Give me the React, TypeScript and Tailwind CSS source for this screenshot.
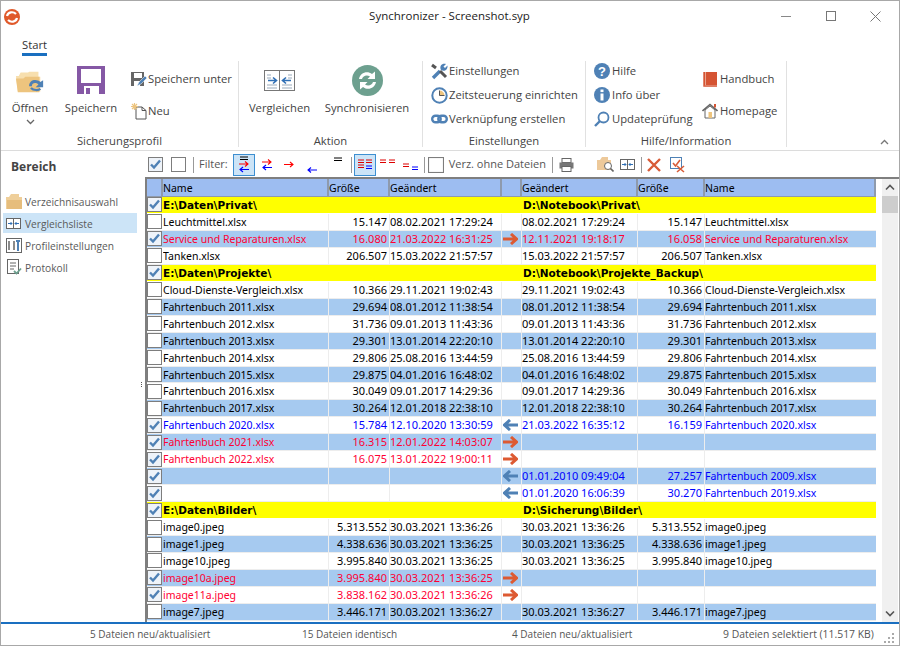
import React from "react";

const BLUE = "#4f81b5";
type Row = { t: "h"; l: string; r: string } | { t?: "f"; c?: boolean; k?: "n" | "r" | "b"; a?: "r" | "l"; n?: string; s?: string; d?: string; d2?: string; s2?: string; n2?: string; k2?: "n" | "r" | "b"; };

const same = (n: string, s: string, d: string, s2?: string): Row => ({ n, s, d, d2: d, s2: s2 ?? s, n2: n });
const rows: Row[] = [
  { t: "h", l: "E:\\Daten\\Privat\\", r: "D:\\Notebook\\Privat\\" },
  same("Leuchtmittel.xlsx", "15.147", "08.02.2021 17:29:24"),
  { c: true, k: "r", a: "r", n: "Service und Reparaturen.xlsx", s: "16.080", d: "21.03.2022 16:31:25", d2: "12.11.2021 19:18:17", s2: "16.058", n2: "Service und Reparaturen.xlsx" },
  same("Tanken.xlsx", "206.507", "15.03.2022 21:57:57"),
  { t: "h", l: "E:\\Daten\\Projekte\\", r: "D:\\Notebook\\Projekte_Backup\\" },
  { n: "Cloud-Dienste-Vergleich.xlsx", s: "10.366", d: "29.11.2021 19:02:43", d2: "29.11.2021 19:02:43", s2: "10.366", n2: "Cloud-Dienste-Vergleich.xlsx" },
  same("Fahrtenbuch 2011.xlsx", "29.694", "08.01.2012 11:38:54"),
  same("Fahrtenbuch 2012.xlsx", "31.736", "09.01.2013 11:43:36"),
  same("Fahrtenbuch 2013.xlsx", "29.301", "13.01.2014 22:20:10"),
  same("Fahrtenbuch 2014.xlsx", "29.806", "25.08.2016 13:44:59"),
  same("Fahrtenbuch 2015.xlsx", "29.875", "04.01.2016 16:48:02"),
  same("Fahrtenbuch 2016.xlsx", "30.049", "09.01.2017 14:29:36"),
  same("Fahrtenbuch 2017.xlsx", "30.264", "12.01.2018 22:38:10"),
  { c: true, k: "b", a: "l", n: "Fahrtenbuch 2020.xlsx", s: "15.784", d: "12.10.2020 13:30:59", d2: "21.03.2022 16:35:12", s2: "16.159", n2: "Fahrtenbuch 2020.xlsx" },
  { c: true, k: "r", a: "r", n: "Fahrtenbuch 2021.xlsx", s: "16.315", d: "12.01.2022 14:03:07" },
  { c: true, k: "r", a: "r", n: "Fahrtenbuch 2022.xlsx", s: "16.075", d: "13.01.2022 19:00:11" },
  { c: true, k: "b", a: "l", d2: "01.01.2010 09:49:04", s2: "27.257", n2: "Fahrtenbuch 2009.xlsx" },
  { c: true, k: "b", a: "l", d2: "01.01.2020 16:06:39", s2: "30.270", n2: "Fahrtenbuch 2019.xlsx" },
  { t: "h", l: "E:\\Daten\\Bilder\\", r: "D:\\Sicherung\\Bilder\\" },
  same("image0.jpeg", "5.313.552", "30.03.2021 13:36:26"),
  same("image1.jpeg", "4.338.636", "30.03.2021 13:36:25"),
  same("image10.jpeg", "3.995.840", "30.03.2021 13:36:25"),
  { c: true, k: "r", a: "r", n: "image10a.jpeg", s: "3.995.840", d: "30.03.2021 13:36:25" },
  { c: true, k: "r", a: "r", n: "image11a.jpeg", s: "3.838.162", d: "30.03.2021 13:36:26" },
  same("image7.jpeg", "3.446.171", "30.03.2021 13:36:27"),
];
const colors = { n: "text-black", r: "text-[#ff0033]", b: "text-[#0000ff]" };

function Check({ on, size = 15 }: { on?: boolean; size?: number }) {
  return (
    <svg width={size} height={size} viewBox="0 0 15 15" className="shrink-0">
      <rect x="0.5" y="0.5" width="14" height="14" fill={on ? "#eef3f9" : "#fff"} stroke="#7d7d7d" />
      {on && <path d="M3 7.5 L6 10.5 L12 3.5" fill="none" stroke={BLUE} strokeWidth="2.4" />}
    </svg>
  );
}
function BigArrow({ dir }: { dir: "r" | "l" }) {
  return dir === "r" ? (
    <svg width="15" height="12" viewBox="0 0 15 12"><path d="M0 6 H12.5 M8 1 L13.5 6 L8 11" fill="none" stroke="#dd5a32" strokeWidth="3" /></svg>
  ) : (
    <svg width="15" height="12" viewBox="0 0 15 12"><path d="M15 6 H2.5 M7 1 L1.5 6 L7 11" fill="none" stroke="#4f81b5" strokeWidth="3" /></svg>
  );
}

const FolderOpen = () => (
  <svg width="30" height="24" viewBox="0 0 32 28" preserveAspectRatio="none">
    <path d="M3 25 L1 7 H4 L6 3 H14 L15 2 H25 V8 H27 V25 Z" fill="#f7dfae" />
    <path d="M3 26 L1 10 H9 L11 8 H26 V26 Z" fill="#edc47e" />
    <path d="M15 19 C15 11 23 10 27 14 L30 12 L30 20 L22 20 L25 17 C22 14 18 15 18 19 Z" fill="#4f81b5" />
    <path d="M17 21 C20 24 25 24 27 22" fill="none" stroke="#4f81b5" strokeWidth="2.5" />
  </svg>
);
const Floppy = () => (
  <svg width="28" height="28" viewBox="0 0 28 28">
    <path d="M0 0 H28 V28 H0 Z" fill="#8558a5" />
    <rect x="4" y="3" width="20" height="14" fill="#fff" />
    <rect x="7" y="20" width="15" height="8" fill="#fff" />
    <rect x="9" y="22" width="4" height="6" fill="#8558a5" />
  </svg>
);
const SaveAs = () => (
  <svg width="16" height="16" viewBox="0 0 16 16">
    <path d="M0 1 H13 V15 H0 Z" fill="#666" />
    <rect x="3" y="2" width="8" height="5" fill="#fff" />
    <rect x="3" y="10" width="6" height="5" fill="#fff" />
    <path d="M6 15 L8 11 L14 5 L16 7 L10 13 Z" fill="#4f81b5" stroke="#fff" strokeWidth="0.5" />
  </svg>
);
const NewDoc = () => (
  <svg width="16" height="17" viewBox="0 0 16 17">
    <path d="M5 4 H11 L15 7.5 V16 H5 Z M11 4 V7.5 H15" fill="#fff" stroke="#555" />
    <path d="M3.5 0 V7 M0 3.5 H7 M1 1 L6 6 M6 1 L1 6" stroke="#edc47e" strokeWidth="1.2" />
  </svg>
);
const Compare = () => (
  <svg width="31" height="21" viewBox="0 0 31 21">
    <rect x="0.5" y="0.5" width="30" height="20" fill="#fff" stroke="#777" />
    <path d="M15.5 0 V21" stroke="#777" />
    <path d="M3 5 H7 M3 8 H7 M3 15 H13 M3 18 H13 M18 15 H28 M18 18 H28 M24 5 H28 M24 8 H28" stroke="#9ab" />
    <path d="M4 10.5 H12 M9 7.5 L12.5 10.5 L9 13.5 M27 10.5 H19 M22 7.5 L18.5 10.5 L22 13.5" fill="none" stroke="#2f6fb5" strokeWidth="1.6" />
  </svg>
);
const CompareSmall = () => (
  <svg width="15" height="11" viewBox="0 0 15 11">
    <rect x="0.5" y="0.5" width="14" height="10" fill="#fff" stroke="#666" />
    <path d="M7.5 0 V11" stroke="#666" />
    <path d="M2 5.5 H6 M4.5 4 L6 5.5 L4.5 7 M13 5.5 H9 M10.5 4 L9 5.5 L10.5 7" fill="none" stroke="#2f6fb5" />
  </svg>
);
const Sync = () => (
  <svg width="31" height="31" viewBox="0 0 31 31">
    <circle cx="15.5" cy="15.5" r="15.5" fill="#6da08f" />
    <path d="M7 14 C8 8 15 5 20 9 L23 6.5 V14 H15.5 L18 11.5 C14.5 9.5 11 11 10 14 Z" fill="#fff" />
    <path d="M24 17 C23 23 16 26 11 22 L8 24.5 V17 H15.5 L13 19.5 C16.5 21.5 20 20 21 17 Z" fill="#fff" />
  </svg>
);
const Wrench = () => (
  <svg width="17" height="17" viewBox="0 0 17 17">
    <path d="M2 15 L9 8" stroke="#4f81b5" strokeWidth="3.4" />
    <path d="M9 8 L15 14" stroke="#555" strokeWidth="3" />
    <path d="M1 2 L5 5" stroke="#555" strokeWidth="3" />
    <path d="M10 7 C8 3 11 0 15 1 L12.5 3.5 L14 5 L16.5 2.5 C17 7 13 9 10 7 Z" fill="#4f81b5" />
  </svg>
);
const Clock = () => (
  <svg width="17" height="17" viewBox="0 0 17 17">
    <circle cx="8.5" cy="8.5" r="7.2" fill="#fff" stroke="#4f81b5" strokeWidth="2" />
    <path d="M8.5 3.5 A5 5 0 0 1 13.5 8.5 H8.5 Z" fill="#edc47e" />
    <path d="M8.5 3.5 V8.5 H13.5" fill="none" stroke="#555" />
  </svg>
);
const Link = () => (
  <svg width="17" height="10" viewBox="0 0 17 10">
    <rect x="1.2" y="1.7" width="8.5" height="6.6" rx="3.3" fill="none" stroke="#4f81b5" strokeWidth="2.4" />
    <rect x="7.3" y="1.7" width="8.5" height="6.6" rx="3.3" fill="none" stroke="#4f81b5" strokeWidth="2.4" />
  </svg>
);
const Help = () => (
  <svg width="16" height="16" viewBox="0 0 16 16">
    <circle cx="8" cy="8" r="8" fill="#4f81b5" />
    <text x="8" y="12.5" textAnchor="middle" fontSize="13" fontWeight="700" fill="#fff" fontFamily="Liberation Sans">?</text>
  </svg>
);
const Info = () => (
  <svg width="16" height="16" viewBox="0 0 16 16">
    <circle cx="8" cy="8" r="8" fill="#4f81b5" />
    <rect x="6.5" y="2.5" width="3" height="2.6" fill="#fff" />
    <rect x="6.5" y="6.5" width="3" height="7" fill="#fff" />
  </svg>
);
const Search = () => (
  <svg width="16" height="16" viewBox="0 0 16 16">
    <circle cx="9.5" cy="6.5" r="5" fill="#fff" stroke="#4f81b5" strokeWidth="1.8" />
    <path d="M6 10 L1 15" stroke="#4f81b5" strokeWidth="2.4" />
  </svg>
);
const Book = () => (
  <svg width="15" height="16" viewBox="0 0 15 16">
    <path d="M1 1 H14 V14 H1 Z" fill="#d55433" />
    <path d="M1 1 V15 H14" fill="none" stroke="#d55433" strokeWidth="1.4" />
    <path d="M2.5 1 V14" stroke="#e9a48f" />
  </svg>
);
const Home = () => (
  <svg width="16" height="16" viewBox="0 0 16 16">
    <path d="M3 7 V15 H13 V7 L8 3 Z" fill="#fff" stroke="#666" />
    <path d="M0.5 8 L8 1.5 L15.5 8" fill="none" stroke="#666" strokeWidth="1.6" />
    <rect x="6.5" y="9" width="3.5" height="6" fill="#edc47e" />
    <rect x="12" y="1" width="2" height="3.5" fill="#d55433" />
  </svg>
);

const Small = ({ icon, text, w = 20 }: { icon: React.ReactNode; text: string; w?: number }) => (
  <div className="flex items-center h-[24px]">
    <span className="flex items-center justify-center shrink-0" style={{ width: w }}>{icon}</span>
    <span className="whitespace-nowrap">{text}</span>
  </div>
);
const Group = ({ w, label, children }: { w: number; label: string; children: React.ReactNode }) => (
  <div className="flex flex-col h-[86px] border-r border-[#e1e1e1] shrink-0" style={{ width: w }}>
    <div className="h-[72px] flex shrink-0">{children}</div>
    <div className="text-center h-[14px] leading-[16px] text-[#444]">{label}</div>
  </div>
);

const FA = ({ c, d }: { c: string; d: "r" | "l" }) => (
  <path d={d === "r" ? "M0 3 H9 M6 0.5 L9 3 L6 5.5" : "M10 3 H1 M4 0.5 L1 3 L4 5.5"} fill="none" stroke={c} strokeWidth="1.1" />
);
const Sep = ({ ml }: { ml: number }) => <div className="w-px h-[16px] bg-[#999] shrink-0" style={{ marginLeft: ml }} />;
const Tool = ({ w, ml = 0, sel, children }: { w: number; ml?: number; sel?: boolean; children: React.ReactNode }) => (
  <div className={`h-[22px] flex items-center justify-center shrink-0 ${sel ? "bg-[#cce4f7] border border-[#3d8fd1]" : ""}`} style={{ width: w, marginLeft: ml }}>{children}</div>
);

const cols = ["w-[16px]", "w-[166px]", "w-[61px]", "w-[112px]", "w-[20px]", "w-[116px]", "w-[67px]", "w-[171px]"];

function HeaderCell({ w, text }: { w: string; text?: string }) {
  return (
    <div className={`${w} h-[18px] shrink-0 bg-[#9dbdf1] border-r-2 border-[#8e9aad] border-b border-b-[#8e9aad] leading-[18px] overflow-hidden text-[10.5px]`}>{text}</div>
  );
}

function Data({ r, i }: { r: Row; i: number }) {
  if (r.t === "h") {
    return (
      <div className="flex h-[16.96px] bg-[#ffff00] border-b border-white font-bold text-black leading-[17px] text-[10.5px]" style={{ fontFamily: '"DejaVu Sans",sans-serif' }}>
        <div className="w-[16px] flex items-center justify-start shrink-0"><Check on /></div>
        <div className="w-[359px] shrink-0">{r.l}</div>
        <div className="pl-[1px] whitespace-nowrap">{r.r}</div>
      </div>
    );
  }
  const f = r as Exclude<Row, { t: "h" }>;
  const c = colors[f.k ?? "n"];
  const cell = "border-r border-[#ededed] h-full shrink-0 overflow-hidden whitespace-nowrap";
  return (
    <div className={`flex h-[16.96px] border-b border-[#ededed] leading-[16px] ${c} ${i % 2 === 0 ? "bg-[#a6caf0]" : "bg-white"}`}>
      <div className="w-[16px] h-full shrink-0 flex items-center"><Check on={f.c} /></div>
      <div className={`${cols[1]} ${cell} text-[10.5px]`}>{f.n}</div>
      <div className={`${cols[2]} ${cell} pr-[2px] text-right`}>{f.s}</div>
      <div className={`${cols[3]} ${cell}`}>{f.d}</div>
      <div className={`${cols[4]} ${cell} flex items-center justify-center pr-[2px]`}>{f.a && <BigArrow dir={f.a} />}</div>
      <div className={`${cols[5]} ${cell}`}>{f.d2}</div>
      <div className={`${cols[6]} ${cell} pr-[2px] text-right`}>{f.s2}</div>
      <div className={`${cols[7]} h-full shrink-0 overflow-hidden whitespace-nowrap text-[10.5px]`}>{f.n2}</div>
    </div>
  );
}

const Side = ({ icon, text, sel }: { icon: React.ReactNode; text: string; sel?: boolean }) => (
  <div className={`flex items-center h-[20px] mb-[2px] ml-[2px] w-[134px] ${sel ? "bg-[#cce4f7]" : ""}`}>
    <span className="w-[22px] pl-[3px] flex items-center shrink-0">{icon}</span>
    <span className="whitespace-nowrap mt-[3px]">{text}</span>
  </div>
);

export default function App() {
  const ui = { fontFamily: '"Open Sans","Noto Sans",sans-serif' };
  return (
    <div className="w-[900px] h-[646px] bg-white border border-[#a8a8a8] flex flex-col overflow-hidden text-[11.25px] text-[#444]" style={ui}>
      {/* Title */}
      <div className="h-[30px] shrink-0 flex items-center pt-[2px]">
        <svg width="16" height="16" viewBox="0 0 16 16" className="ml-[3px] shrink-0">
          <circle cx="8" cy="8" r="8" fill="#e0592a" />
          <path d="M3 7 C4 3 9 2 12 5 M13 9 C12 13 7 14 4 11" fill="none" stroke="#fff" strokeWidth="2.2" />
        </svg>
        <div className="flex-1 text-center text-[11.5px] text-[#222] pl-[116px] -mt-[2px]">Synchronizer - Screenshot.syp</div>
        <div className="flex items-center w-[135px] h-full mr-[1px] -mt-[2px]">
          <div className="w-[45px] flex justify-center"><div className="w-[10px] h-px bg-[#888]" /></div>
          <div className="w-[45px] flex justify-center"><div className="w-[10px] h-[10px] border border-[#777]" /></div>
          <div className="w-[45px] flex justify-center">
            <svg width="11" height="11" viewBox="0 0 11 11"><path d="M0.5 0.5 L10.5 10.5 M10.5 0.5 L0.5 10.5" stroke="#777" /></svg>
          </div>
        </div>
      </div>
      {/* Tabs */}
      <div className="h-[25px] shrink-0 pl-[21px] flex items-end">
        <div className="h-[25px] w-[25px] text-center text-[#333] border-b-[3px] border-[#1a6fc0] leading-[28px] whitespace-nowrap flex justify-center">Start</div>
      </div>
      {/* Ribbon */}
      <div className="h-[95px] shrink-0 border-b border-[#dcdcdc] flex pt-[5px] relative text-[#444]">
        <Group w={238} label="Sicherungsprofil">
          <div className="w-[58px] flex flex-col items-center pt-[9px] shrink-0">
            <div className="h-[24px]"><FolderOpen /></div>
            <div className="mt-[6px] leading-[16px]">Öffnen</div>
            <svg width="9" height="6" viewBox="0 0 9 6" className="mt-[3px]"><path d="M1 1 L4.5 4.5 L8 1" fill="none" stroke="#666" strokeWidth="1.3" /></svg>
          </div>
          <div className="w-[64px] flex flex-col items-center pt-[5px] shrink-0">
            <Floppy />
            <div className="mt-[6px] leading-[16px]">Speichern</div>
          </div>
          <div className="flex flex-col pl-[6px] pt-[6px] gap-[8px]">
            <Small icon={<SaveAs />} text="Speichern unter" w={19} />
            <Small icon={<NewDoc />} text="Neu" w={19} />
          </div>
        </Group>
        <Group w={184} label="Aktion">
          <div className="w-[81px] flex flex-col items-center pt-[9px] shrink-0">
            <div className="h-[24px]"><Compare /></div>
            <div className="mt-[6px] leading-[16px]">Vergleichen</div>
          </div>
          <div className="flex-1 flex flex-col items-center pt-[4px] pr-[8px]">
            <Sync />
            <div className="mt-[4px] leading-[16px] whitespace-nowrap">Synchronisieren</div>
          </div>
        </Group>
        <Group w={163} label="Einstellungen">
          <div className="flex flex-col pl-[6px] -mt-[2px]">
            <Small icon={<Wrench />} text="Einstellungen" />
            <Small icon={<Clock />} text="Zeitsteuerung einrichten" />
            <Small icon={<Link />} text="Verknüpfung erstellen" />
          </div>
        </Group>
        <Group w={201} label="Hilfe/Information">
          <div className="flex flex-col pl-[6px] w-[114px] shrink-0 -mt-[2px]">
            <Small icon={<Help />} text="Hilfe" />
            <Small icon={<Info />} text="Info über" />
            <Small icon={<Search />} text="Updateprüfung" />
          </div>
          <div className="flex flex-col pt-[6px] gap-[8px]">
            <Small icon={<Book />} text="Handbuch" />
            <Small icon={<Home />} text="Homepage" />
          </div>
        </Group>
        <svg width="9" height="6" viewBox="0 0 9 6" className="absolute right-[10px] bottom-[5px]"><path d="M1 5 L4.5 1.5 L8 5" fill="none" stroke="#777" strokeWidth="1.3" /></svg>
      </div>
      {/* Main */}
      <div className="flex-1 flex min-h-0 relative">
        <div className="w-[144px] shrink-0 text-[#5a5a5a] text-[10.2px]">
          <div className="pl-[10px] pt-[7px] h-[40px] font-bold text-[12px] text-[#444]">Bereich</div>
          <Side text="Verzeichnisauswahl" icon={
            <svg width="17" height="15" viewBox="0 0 17 15"><path d="M0 3 H3 L5 0 H13 V3 H16 V15 H0 Z" fill="#efcf9a" /><path d="M1 6 H16 V15 H1 Z" fill="#e6bd7c" /></svg>
          } />
          <Side sel text="Vergleichsliste" icon={<CompareSmall />} />
          <Side text="Profileinstellungen" icon={
            <svg width="16" height="15" viewBox="0 0 16 15"><rect x="0.5" y="0.5" width="15" height="14" fill="#fff" stroke="#666" /><path d="M3 3 V12 M8 3 V12" stroke="#666" strokeWidth="1.5" /><path d="M12 2 V13 M10 3 H14" stroke="#4f81b5" strokeWidth="2" /></svg>
          } />
          <Side text="Protokoll" icon={
            <svg width="16" height="16" viewBox="0 0 16 16"><rect x="1.5" y="0.5" width="11" height="14" fill="#fff" stroke="#666" /><path d="M4 4 H10 M4 7 H10 M4 10 H8" stroke="#666" /><path d="M8 12 L10.5 14.5 L15 9.5" fill="none" stroke="#6da08f" strokeWidth="1.8" /></svg>
          } />
        </div>
        <div className="absolute left-[140px] top-[231px] flex flex-col gap-[1px]">
          <div className="w-px h-px bg-[#555]" /><div className="w-px h-px bg-[#555]" /><div className="w-px h-px bg-[#555]" />
        </div>
        <div className="flex-1 flex flex-col min-w-0">
          {/* Toolbar */}
          <div className="h-[26px] shrink-0 flex items-center pt-[1px]">
            <div className="ml-[3px]"><Check on size={15} /></div>
            <div className="ml-[8px]"><Check size={15} /></div>
            <Sep ml={7} />
            <span className="ml-[5px] mr-[5px] text-[11px] text-[#555]">Filter:</span>
            <Tool w={22} sel>
              <svg width="12" height="17" viewBox="0 0 12 17"><path d="M2 1 H10 M2 3.5 H10" stroke="#000" /><g transform="translate(1 5)"><FA c="#f00" d="r" /></g><g transform="translate(1 10.5)"><FA c="#00f" d="l" /></g></svg>
            </Tool>
            <Tool w={22} ml={1}>
              <svg width="12" height="13" viewBox="0 0 12 13"><g transform="translate(1 1)"><FA c="#f00" d="r" /></g><g transform="translate(1 6.5)"><FA c="#00f" d="l" /></g></svg>
            </Tool>
            <Tool w={23}>
              <svg width="12" height="7" viewBox="0 0 12 7"><g transform="translate(1 0.5)"><FA c="#f00" d="r" /></g></svg>
            </Tool>
            <Tool w={23}>
              <svg width="12" height="16" viewBox="0 0 12 16"><g transform="translate(1 10)"><FA c="#00f" d="l" /></g></svg>
            </Tool>
            <Tool w={24} ml={2}>
              <svg width="10" height="16" viewBox="0 0 10 16"><path d="M1 1 H9 M1 3.5 H9" stroke="#000" /></svg>
            </Tool>
            <Sep ml={1} />
            <Tool w={22} ml={2} sel>
              <svg width="16" height="12" viewBox="0 0 16 12"><path d="M1 1 H7 M1 3.5 H7 M1 6 H7 M1 8.5 H7" stroke="#d00" /><path d="M9 1 H15 M9 3.5 H15" stroke="#d00" /><path d="M9 7 H15 M9 9.5 H15" stroke="#00f" /></svg>
            </Tool>
            <Tool w={20} ml={2}>
              <svg width="15" height="12" viewBox="0 0 15 12"><path d="M0 1 H6 M0 3.5 H6 M9 1 H15 M9 3.5 H15" stroke="#d00" /></svg>
            </Tool>
            <Tool w={23} ml={2}>
              <svg width="18" height="12" viewBox="0 0 18 12"><path d="M1 5 H7 M1 7.5 H7" stroke="#d00" /><path d="M10 8 H16 M10 10.5 H16" stroke="#00f" /></svg>
            </Tool>
            <Sep ml={1} />
            <div className="ml-[3px]"><Check size={16} /></div>
            <span className="ml-[5px] text-[11px] text-[#555] whitespace-nowrap w-[98px]">Verz. ohne Dateien</span>
            <Sep ml={5} />
            <svg width="15" height="14" viewBox="0 0 15 14" className="ml-[6px] shrink-0"><rect x="3" y="0.5" width="9" height="4" fill="#fff" stroke="#666" /><rect x="0.5" y="4.5" width="14" height="6" fill="#777" /><rect x="3" y="8.5" width="9" height="5" fill="#fff" stroke="#666" /></svg>
            <svg width="17" height="15" viewBox="0 0 17 15" className="ml-[23px] shrink-0"><path d="M0 3 H3 L5 0 H11 V3 H14 V13 H0 Z" fill="#edc99a" /><circle cx="11" cy="9" r="3.5" fill="#fff" stroke="#666" /><path d="M13.5 11.5 L16.5 14.5" stroke="#666" strokeWidth="1.6" /></svg>
            <div className="ml-[6px] shrink-0 flex"><CompareSmall /></div>
            <Sep ml={6} />
            <svg width="14" height="14" viewBox="0 0 14 14" className="ml-[5px] shrink-0"><path d="M1 1 L13 13 M13 1 L1 13" stroke="#d85c38" strokeWidth="2.4" /></svg>
            <svg width="16" height="16" viewBox="0 0 16 16" className="ml-[9px] shrink-0"><rect x="0.5" y="0.5" width="11" height="11" fill="#fff" stroke="#4f81b5" /><path d="M3 6 L5.5 9 L10 3" fill="none" stroke="#d85c38" strokeWidth="1.6" /><path d="M7 9 L14 15 M14 9 L7 15" stroke="#d85c38" strokeWidth="1.6" /></svg>
          </div>
          {/* Table */}
          <div className="flex-1 min-h-0 flex border-l-2 border-t-2 border-[#7f7f7f] text-[11px] text-black overflow-hidden" style={{ fontFamily: '"Noto Sans","Open Sans",sans-serif' }}>
            <div className="w-[729px] shrink-0 flex flex-col">
              <div className="flex shrink-0">
                <HeaderCell w="w-[16px]" />
                <HeaderCell w="w-[166px]" text="Name" />
                <HeaderCell w="w-[61px]" text="Größe" />
                <HeaderCell w="w-[112px]" text="Geändert" />
                <HeaderCell w="w-[20px]" />
                <HeaderCell w="w-[116px]" text="Geändert" />
                <HeaderCell w="w-[67px]" text="Größe" />
                <HeaderCell w="w-[171px]" text="Name" />
              </div>
              {rows.map((r, i) => <Data key={i} r={r} i={i} />)}
            </div>
            <div className="w-[6px] shrink-0" />
            <div className="w-[16px] shrink-0 bg-[#f0f0f0] flex flex-col items-center">
              <svg width="10" height="7" viewBox="0 0 10 7" className="mt-[5px]"><path d="M1 5.5 L5 1.5 L9 5.5" fill="none" stroke="#555" strokeWidth="1.6" /></svg>
              <div className="w-[16px] h-[17px] bg-[#cdcdcd] mt-[5px]" />
              <div className="flex-1" />
              <svg width="10" height="7" viewBox="0 0 10 7" className="mb-[5px]"><path d="M1 1.5 L5 5.5 L9 1.5" fill="none" stroke="#555" strokeWidth="1.6" /></svg>
            </div>
          </div>
        </div>
      </div>
      {/* Status */}
      <div className="h-[23px] shrink-0 border-t-2 border-[#1a6fc0] flex items-center text-[10px] text-[#555] relative">
        <span className="ml-[89px] whitespace-nowrap w-[212px]">5 Dateien neu/aktualisiert</span>
        <span className="whitespace-nowrap w-[210px]">15 Dateien identisch</span>
        <span className="whitespace-nowrap w-[211px]">4 Dateien neu/aktualisiert</span>
        <span className="whitespace-nowrap text-[10.4px]">9 Dateien selektiert (11.517 KB)</span>
        <svg width="11" height="11" viewBox="0 0 11 11" className="absolute right-[4px] bottom-[2px]"><path d="M8 1 h2 v2 h-2z M4 5 h2 v2 h-2z M8 5 h2 v2 h-2z M0 9 h2 v2 h-2z M4 9 h2 v2 h-2z M8 9 h2 v2 h-2z" fill="#aaa" /></svg>
      </div>
    </div>
  );
}
